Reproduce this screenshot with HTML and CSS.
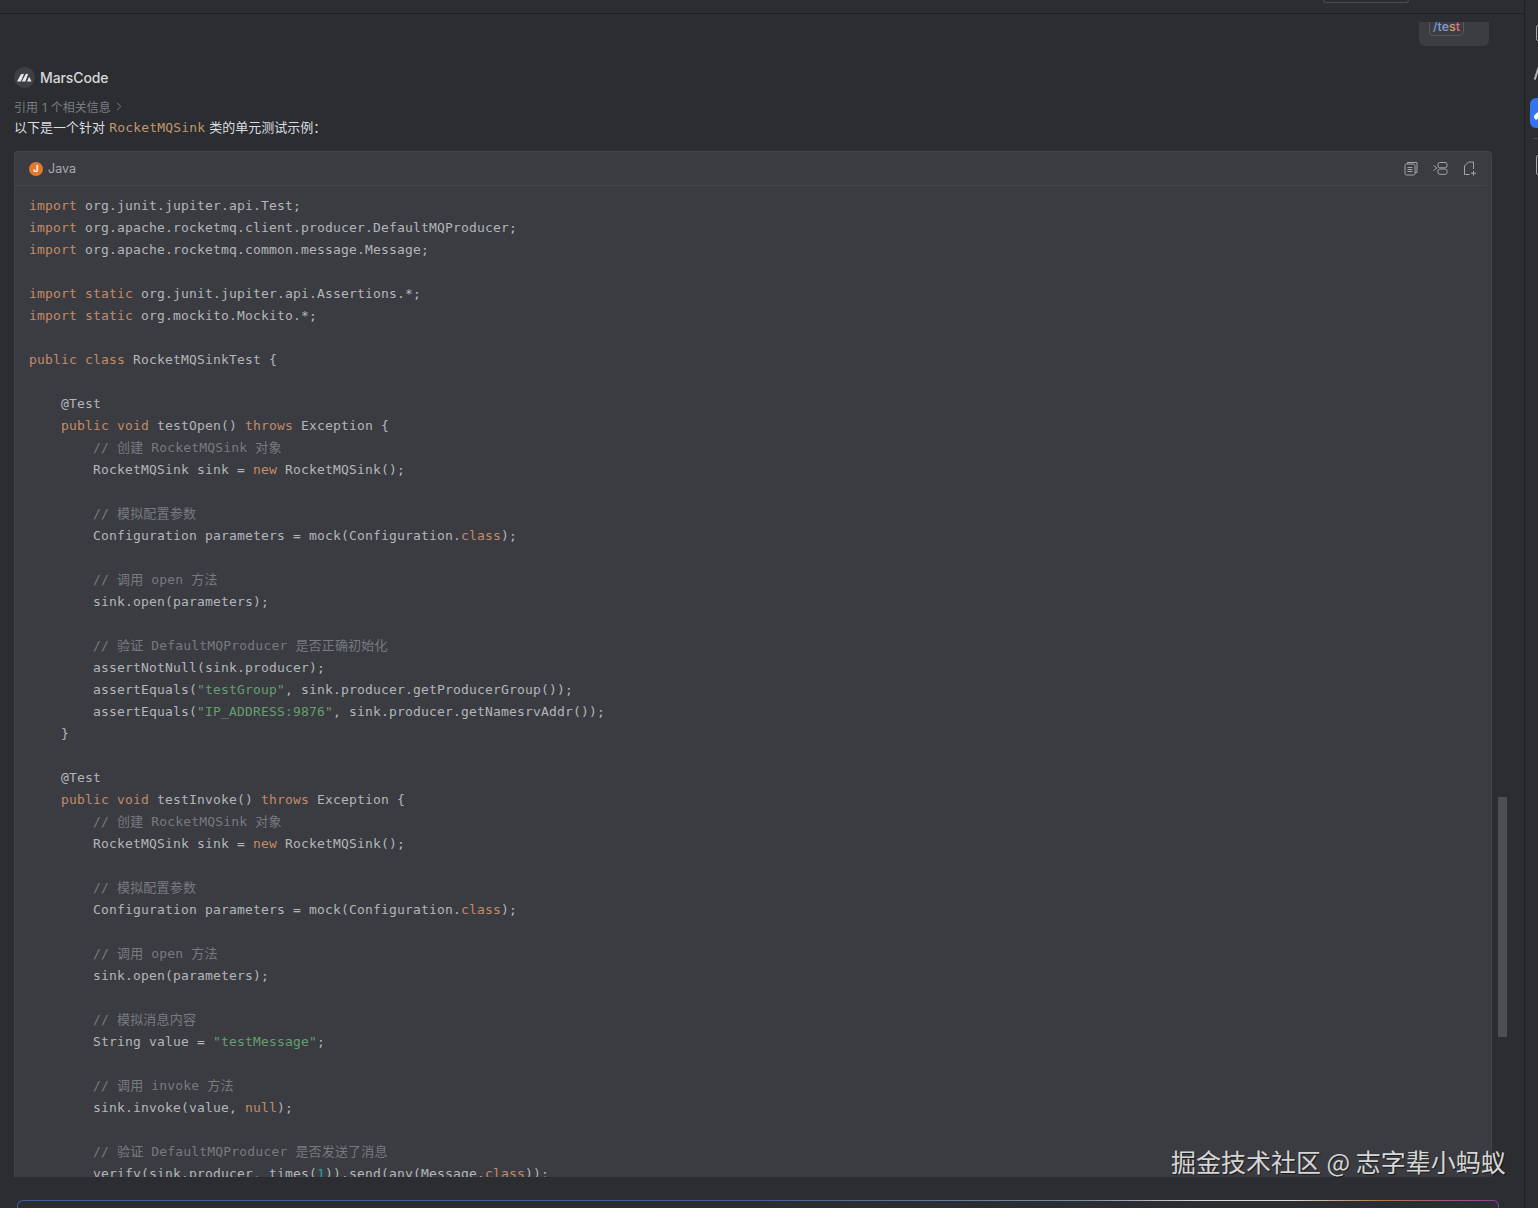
FILE: index.html
```html
<!DOCTYPE html>
<html lang="zh">
<head>
<meta charset="utf-8">
<title>MarsCode</title>
<link rel="stylesheet" href="styles.css">
</head>
<body>
<div class="app">
  <main class="main">
    <header class="topbar"><span class="top-btn"></span></header>
    <section class="chat">
      <div class="bubble"><span class="tag"><span class="c1">/</span><span class="c2">te</span><span class="c3">s</span><span class="c4">t</span></span></div>
      <div class="author">
        <span class="avatar">
          <svg width="15" height="9" viewBox="0 0 15 9"><path d="M0 8.500 4 1.200 7 .8 3.800 8.500ZM4.800 8.500 8.800 1 11.200 .8 8.300 8.500ZM10 8.500 12.200 3.800 14.500 8.500Z" fill="#e8e9ec"/></svg>
        </span>
        <span class="author-name">MarsCode</span>
      </div>
      <div class="refs">引用 1 个相关信息
        <svg width="6" height="9" viewBox="0 0 6 9"><path d="M1 .8 4.800 4.500 1 8.200" fill="none" stroke="#7a7d83" stroke-width="1"/></svg>
      </div>
      <p class="intro">以下是一个针对 <code class="inline">RocketMQSink</code> 类的单元测试示例：</p>
      <div class="card">
        <div class="card-head">
          <span class="lang">
            <span class="java-dot">J</span>
            Java
          </span>
          <span class="tools">
            <svg width="14" height="15" viewBox="0 0 14 15" fill="none" stroke="#a3a5aa" stroke-width="1"><rect x="1" y="3" width="10" height="11" rx="1.500"/><path d="M3.500 3V1.500H13V11.500H11M3.500 6.500H8.500M3.500 8.500H8.500M3.500 10.500H8.500"/></svg>
            <svg width="15" height="13" viewBox="0 0 15 13" fill="none" stroke="#a3a5aa" stroke-width="1"><path d="M.5 3.500 4 6 .5 8.500"/><rect x="5" y=".5" width="9" height="5.300" rx="1.800"/><rect x="5" y="7" width="9" height="5.300" rx="1.800"/></svg>
            <svg width="14" height="15" viewBox="0 0 14 15" fill="none" stroke="#a3a5aa" stroke-width="1"><path d="M6.500 13.500H1.500V5L5.500 1H10.500V8M10.500 10V14.500M8 12.200H13"/></svg>
          </span>
        </div>
<pre class="code"><span class="k">import</span> org.junit.jupiter.api.Test;
<span class="k">import</span> org.apache.rocketmq.client.producer.DefaultMQProducer;
<span class="k">import</span> org.apache.rocketmq.common.message.Message;

<span class="k">import static</span> org.junit.jupiter.api.Assertions.*;
<span class="k">import static</span> org.mockito.Mockito.*;

<span class="k">public class</span> RocketMQSinkTest {

    @Test
    <span class="k">public void</span> testOpen() <span class="k">throws</span> Exception {
        <span class="m">// 创建 RocketMQSink 对象</span>
        RocketMQSink sink = <span class="k">new</span> RocketMQSink();

        <span class="m">// 模拟配置参数</span>
        Configuration parameters = mock(Configuration.<span class="k">class</span>);

        <span class="m">// 调用 open 方法</span>
        sink.open(parameters);

        <span class="m">// 验证 DefaultMQProducer 是否正确初始化</span>
        assertNotNull(sink.producer);
        assertEquals(<span class="s">"testGroup"</span>, sink.producer.getProducerGroup());
        assertEquals(<span class="s">"IP_ADDRESS:9876"</span>, sink.producer.getNamesrvAddr());
    }

    @Test
    <span class="k">public void</span> testInvoke() <span class="k">throws</span> Exception {
        <span class="m">// 创建 RocketMQSink 对象</span>
        RocketMQSink sink = <span class="k">new</span> RocketMQSink();

        <span class="m">// 模拟配置参数</span>
        Configuration parameters = mock(Configuration.<span class="k">class</span>);

        <span class="m">// 调用 open 方法</span>
        sink.open(parameters);

        <span class="m">// 模拟消息内容</span>
        String value = <span class="s">"testMessage"</span>;

        <span class="m">// 调用 invoke 方法</span>
        sink.invoke(value, <span class="k">null</span>);

        <span class="m">// 验证 DefaultMQProducer 是否发送了消息</span>
        verify(sink.producer, times(<span class="n">1</span>)).send(any(Message.<span class="k">class</span>));
    }
}</pre>
      </div>
      <div class="scrollbar"></div>
    </section>
    <footer class="footer"><div class="composer"></div></footer>
  </main>
  <aside class="side">
    <span class="side-icon"></span>
    <span class="side-slash"></span>
    <span class="side-active"></span>
    <span class="side-rule"></span>
    <span class="side-icon"></span>
  </aside>
</div>
<div class="watermark">掘金技术社区 @ 志字辈小蚂蚁</div>
</body>
</html>
```
FILE: styles.css
```css
* { box-sizing: border-box; }
html, body { margin: 0; height: 100%; overflow: hidden; }
body {
  position: relative;
  background: #2b2d30;
  color: #d4d5d8;
  font-family: Inter, "Noto Sans CJK SC", sans-serif;
}
.app { display: flex; height: 1208px; }
.main { width: 1524px; display: flex; flex-direction: column; }
.topbar {
  height: 14px;
  flex: none;
  border-bottom: 1px solid #1f2023;
  padding-left: 1323px;
}
.top-btn {
  display: block;
  width: 86px;
  height: 3px;
  border: 1px solid #4a4c51;
  border-top: 0;
  border-radius: 0 0 4px 4px;
}
.chat {
  flex: 1;
  min-height: 0;
  margin-top: 8px;
  padding: 0 32px 0 14px;
  overflow: hidden;
  position: relative;
  display: flex;
  flex-direction: column;
}
.bubble {
  flex: none;
  align-self: flex-end;
  margin: -18px 3px 0 0;
  width: 70px;
  height: 42px;
  padding: 18px 0 0 10px;
  background: #3b3d41;
  border-radius: 6px;
}
.tag {
  display: block;
  width: 35px;
  height: 18px;
  margin-top: -4px;
  border: 1px solid #55575c;
  border-radius: 4px;
  text-align: center;
  font-size: 12.500px;
  line-height: 16px;
  font-weight: 500;
}
.c1 { color: #6f9be0; }
.c2 { color: #7f9fd0; }
.c3 { color: #d79a6f; }
.c4 { color: #d9708a; }
.author { flex: none; display: flex; align-items: center; gap: 5px; margin-top: 21px; height: 20px; padding-left: 0; }
.avatar {
  width: 21px;
  height: 21px;
  border-radius: 50%;
  background: #3e4045;
  display: flex;
  align-items: center;
  justify-content: center;
}
.author-name { font-size: 14px; font-weight: 500; color: #d6d7da; letter-spacing: -.1px; }
.refs {
  flex: none;
  display: flex;
  align-items: center;
  gap: 5px;
  margin-top: 10px;
  height: 18px;
  font-size: 12px;
  word-spacing: .5px;
  color: #7a7d83;
}
.intro {
  flex: none;
  margin: 2px 0 0;
  height: 20px;
  font-size: 13px;
  line-height: 20px;
  color: #dcdde0;
}
.inline {
  font-family: "DejaVu Sans Mono", "Noto Sans CJK SC", monospace;
  font-size: 13px;
  letter-spacing: .174px;
  margin: 0 .5px;
  color: #c0986e;
}
.card {
  flex: 1;
  min-height: 0;
  margin-top: 14px;
  background: #3a3c41;
  border: 1px solid #424449;
  border-bottom: 0;
  border-radius: 4px 4px 0 0;
  overflow: hidden;
}
.card-head {
  height: 34px;
  margin: 0 4px 0 0;
  padding: 0 10px 0 14px;
  border-bottom: 1px solid #44464b;
  display: flex;
  align-items: center;
  justify-content: space-between;
}
.lang { display: flex; align-items: center; gap: 5px; font-size: 12.500px; color: #a9abb0; }
.java-dot {
  width: 14px;
  height: 14px;
  border-radius: 50%;
  background: #e07a2f;
  color: #fff;
  font-size: 9px;
  font-weight: 700;
  line-height: 14px;
  text-align: center;
}
.tools { display: flex; align-items: center; gap: 15px; }
.code {
  margin: 0;
  padding: 9px 14px 0;
  font-family: "DejaVu Sans Mono", "Noto Sans CJK SC", monospace;
  font-size: 13px;
  letter-spacing: .174px;
  line-height: 22px;
  color: #b4b6bb;
}
.k { color: #c58a68; }
.s { color: #659f6d; }
.m { color: #777a80; }
.n { color: #2aa3ae; }
.scrollbar {
  position: absolute;
  left: 1498px;
  top: 775px;
  width: 9px;
  height: 240px;
  background: #4d4f52;
}
.footer { height: 31px; flex: none; padding: 23px 25px 0 17px; overflow: hidden; }
.composer {
  height: 30px;
  border: 1px solid transparent;
  border-radius: 6px;
  background:
    linear-gradient(#2b2d30, #2b2d30) padding-box,
    linear-gradient(90deg, #3e5f9c 0%, #3f5f96 50%, #7d8ba0 72%, #d8d8d8 80%, #d8d8d8 86%, #b07a4a 92%, #8a3fa8 100%) border-box;
}
.side {
  flex: 1;
  border-left: 1px solid #1f2023;
  position: relative;
  overflow: hidden;
}
.side-icon {
  position: absolute;
  left: 11px;
  top: 25px;
  width: 12px;
  height: 16px;
  border: 1.500px solid #a3a5aa;
  border-radius: 2px;
}
.side-icon:last-child { top: 155px; height: 20px; }
.side-slash {
  position: absolute;
  left: 11px;
  top: 65px;
  width: 2px;
  height: 15px;
  background: #b0b2b6;
  transform: rotate(18deg);
}
.side-active {
  position: absolute;
  left: 5px;
  top: 98px;
  width: 30px;
  height: 30px;
  border-radius: 6px;
  background: #3574f0;
}
.side-active::after {
  content: "";
  position: absolute;
  left: 3px;
  top: 14px;
  width: 12px;
  height: 5px;
  border-radius: 4px 0 0 2px;
  background: #fff;
  transform: rotate(-40deg);
}
.side-rule {
  position: absolute;
  left: 8px;
  top: 138px;
  width: 20px;
  height: 1px;
  background: #4a4c51;
}
.watermark {
  position: absolute;
  left: 1171px;
  top: 1143px;
  font-family: "Noto Sans CJK SC", sans-serif;
  font-size: 25px;
  line-height: 36px;
  white-space: nowrap;
  color: #d6d6d6;
  text-shadow: 1px 1px 1px rgba(0, 0, 0, .55);
}
```
